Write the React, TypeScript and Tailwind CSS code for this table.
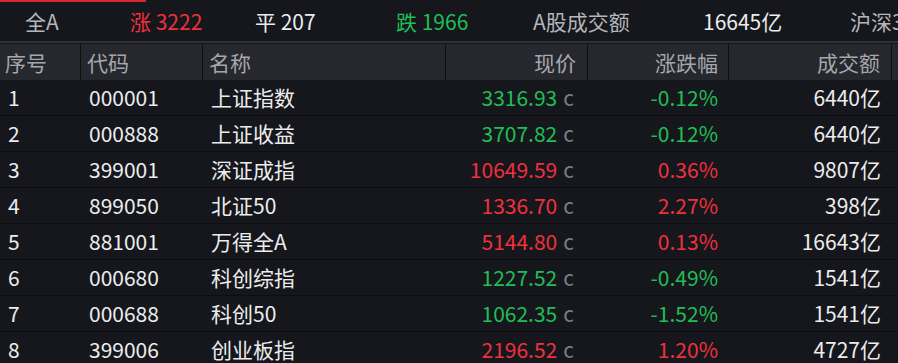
import React from "react";

const font = { fontFamily: '"Noto Sans CJK SC", "Noto Sans", sans-serif' };

const rows = [
  { no: "1", code: "000001", name: "上证指数", price: "3316.93", pct: "-0.12%", amt: "6440亿", up: false },
  { no: "2", code: "000888", name: "上证收益", price: "3707.82", pct: "-0.12%", amt: "6440亿", up: false },
  { no: "3", code: "399001", name: "深证成指", price: "10649.59", pct: "0.36%", amt: "9807亿", up: true },
  { no: "4", code: "899050", name: "北证50", price: "1336.70", pct: "2.27%", amt: "398亿", up: true },
  { no: "5", code: "881001", name: "万得全A", price: "5144.80", pct: "0.13%", amt: "16643亿", up: true },
  { no: "6", code: "000680", name: "科创综指", price: "1227.52", pct: "-0.49%", amt: "1541亿", up: false },
  { no: "7", code: "000688", name: "科创50", price: "1062.35", pct: "-1.52%", amt: "1541亿", up: false },
  { no: "8", code: "399006", name: "创业板指", price: "2196.52", pct: "1.20%", amt: "4727亿", up: true },
];

const cols = "grid grid-cols-[81px_122px_243px_142px_141px_163px_1fr]";

export default function App() {
  return (
    <div className="w-[898px] h-[363px] overflow-hidden bg-[#15171c] text-[21px] leading-none" style={font}>
      {/* market summary */}
      <div className="relative h-[41px] flex items-center whitespace-nowrap pt-[1px]">
        <div className="absolute left-0 top-0 h-[2px] w-[146px] bg-[#d8262d]" />
        <span className="w-[130px] shrink-0 pl-[25px] text-[#b4b6bb]">全A</span>
        <span className="w-[125px] shrink-0 text-[#f0303c]">涨 3222</span>
        <span className="w-[141px] shrink-0 text-[#ececec]">平 207</span>
        <span className="w-[137px] shrink-0 text-[#1fbf55]">跌 1966</span>
        <span className="w-[170px] shrink-0 text-[#b4b6bb]">A股成交额</span>
        <span className="w-[147px] shrink-0 text-[#ececec]">16645亿</span>
        <span className="shrink-0 text-[#b4b6bb]">沪深300</span>
      </div>
      <div className="h-[2px] bg-[#303137]" />
      <div className="h-[1px]" />

      {/* table header */}
      <div className={`${cols} h-[36px] bg-[#27282d] text-[#a3a7ae]`}>
        <div className="flex items-center pl-[5px] border-r border-[#0e0f12]">序号</div>
        <div className="flex items-center pl-[6px] border-r border-[#0e0f12]">代码</div>
        <div className="flex items-center pl-[6px] border-r border-[#0e0f12]">名称</div>
        <div className="flex items-center justify-end pr-[11px] border-r border-[#0e0f12]">现价</div>
        <div className="flex items-center justify-end pr-[10px] border-r border-[#0e0f12]">涨跌幅</div>
        <div className="flex items-center justify-end pr-[11px] border-r border-[#0e0f12]">成交额</div>
        <div />
      </div>

      {/* rows */}
      {rows.map((r) => {
        const color = r.up ? "text-[#f0303c]" : "text-[#1fbf55]";
        return (
          <div key={r.no} className={`${cols} h-[36px] border-b border-[#0d0e11] text-[#ececec]`}>
            <div className="flex items-center pl-[8px]">{r.no}</div>
            <div className="flex items-center pl-[8px]">{r.code}</div>
            <div className="flex items-center pl-[8px]">{r.name}</div>
            <div className="flex items-center justify-end pr-[14px]">
              <span className={color}>{r.price}</span>
              <span className="ml-[6px] text-[#7c7d80]">c</span>
            </div>
            <div className={`flex items-center justify-end pr-[11px] ${color}`}>{r.pct}</div>
            <div className="flex items-center justify-end pr-[11px]">{r.amt}</div>
            <div />
          </div>
        );
      })}
    </div>
  );
}
